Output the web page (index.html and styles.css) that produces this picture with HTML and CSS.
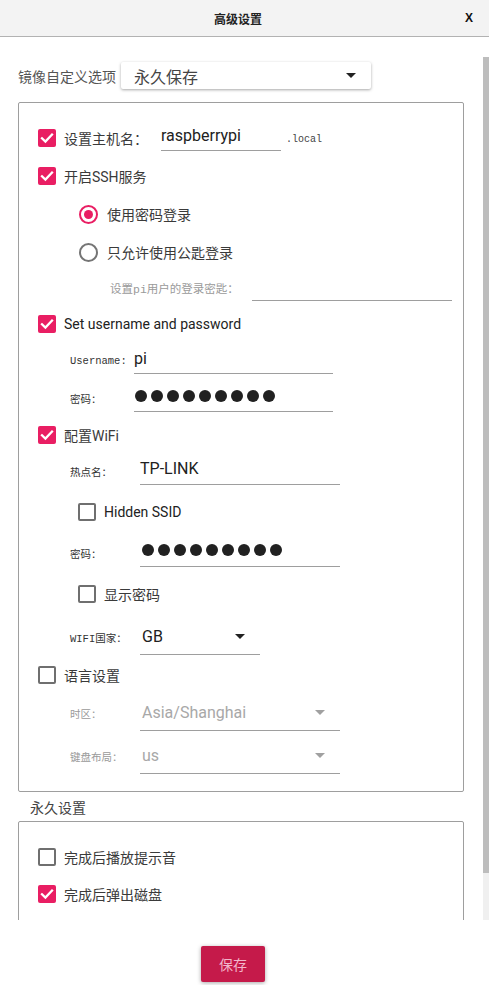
FILE: index.html
```html
<!DOCTYPE html>
<html lang="zh-CN">
<head>
<meta charset="utf-8">
<title>高级设置</title>
<link rel="stylesheet" href="styles.css">
</head>
<body>
<div class="app">
  <header class="titlebar">
    <span></span>
    <span class="title">高级设置</span>
    <span class="close">X</span>
  </header>

  <div class="main">
    <div class="scroll">
      <div class="preset-row">
        <span class="preset-label">镜像自定义选项</span>
        <div class="preset-select">
          <span>永久保存</span>
          <span class="caret"></span>
        </div>
      </div>

      <div class="group">
        <div class="row r38">
          <span class="cb on"><svg viewBox="0 0 18 18"><path d="M4 9.3 L7.4 12.6 L14 5.6"/></svg></span>
          <span class="lbl">设置主机名：</span>
          <div class="field host">raspberrypi</div>
          <span class="suffix">.local</span>
        </div>
        <div class="row r38">
          <span class="cb on"><svg viewBox="0 0 18 18"><path d="M4 9.3 L7.4 12.6 L14 5.6"/></svg></span>
          <span class="lbl">开启SSH服务</span>
        </div>
        <div class="row r38 ind-radio">
          <span class="radio on"></span>
          <span class="lbl">使用密码登录</span>
        </div>
        <div class="row r38 ind-radio">
          <span class="radio"></span>
          <span class="lbl">只允许使用公匙登录</span>
        </div>
        <div class="row r34 ind-key">
          <span class="key-lbl">设置pi用户的登录密匙：</span>
          <div class="field key"></div>
        </div>

        <div class="row r38">
          <span class="cb on"><svg viewBox="0 0 18 18"><path d="M4 9.3 L7.4 12.6 L14 5.6"/></svg></span>
          <span class="lbl latin">Set username and password</span>
        </div>
        <div class="row r35 ind-sub">
          <span class="sub-lbl w64">Username:</span>
          <div class="field user">pi</div>
        </div>
        <div class="row r40 ind-sub">
          <span class="sub-lbl w64">密码：</span>
          <div class="field user dots"><i></i><i></i><i></i><i></i><i></i><i></i><i></i><i></i><i></i></div>
        </div>

        <div class="row r34">
          <span class="cb on"><svg viewBox="0 0 18 18"><path d="M4 9.3 L7.4 12.6 L14 5.6"/></svg></span>
          <span class="lbl">配置WiFi</span>
        </div>
        <div class="row r38 ind-sub">
          <span class="sub-lbl w70">热点名：</span>
          <div class="field wide">TP-LINK</div>
        </div>
        <div class="row r44 ind-cb">
          <span class="cb"></span>
          <span class="lbl latin">Hidden SSID</span>
        </div>
        <div class="row r38 ind-sub">
          <span class="sub-lbl w70">密码：</span>
          <div class="field wide dots"><i></i><i></i><i></i><i></i><i></i><i></i><i></i><i></i><i></i></div>
        </div>
        <div class="row r44 ind-cb">
          <span class="cb"></span>
          <span class="lbl">显示密码</span>
        </div>
        <div class="row r42 ind-sub">
          <span class="sub-lbl w70">WIFI国家：</span>
          <div class="select country"><span>GB</span><span class="caret"></span></div>
        </div>

        <div class="row r34">
          <span class="cb"></span>
          <span class="lbl">语言设置</span>
        </div>
        <div class="row r42 ind-sub">
          <span class="sub-lbl w70 muted">时区：</span>
          <div class="select wide disabled"><span>Asia/Shanghai</span><span class="caret"></span></div>
        </div>
        <div class="row r44 ind-sub">
          <span class="sub-lbl w70 muted">键盘布局：</span>
          <div class="select wide disabled"><span>us</span><span class="caret"></span></div>
        </div>
      </div>

      <div class="section-title">永久设置</div>

      <div class="group group2">
        <div class="row r36">
          <span class="cb"></span>
          <span class="lbl">完成后播放提示音</span>
        </div>
        <div class="row r38">
          <span class="cb on"><svg viewBox="0 0 18 18"><path d="M4 9.3 L7.4 12.6 L14 5.6"/></svg></span>
          <span class="lbl">完成后弹出磁盘</span>
        </div>
      </div>
    </div>
    <div class="scrollbar"><div class="thumb"></div></div>
  </div>

  <footer class="footer">
    <button class="save">保存</button>
  </footer>
</div>
</body>
</html>
```

FILE: styles.css
```css
* { box-sizing: border-box; }

html, body {
  margin: 0;
  padding: 0;
  background: #ffffff;
}

body {
  font-family: Roboto, "Noto Sans CJK SC", sans-serif;
  color: #333333;
  width: 489px;
  height: 985px;
  overflow: hidden;
}

.app {
  display: flex;
  flex-direction: column;
  height: 985px;
}

/* title bar */
.titlebar {
  height: 37px;
  flex: 0 0 37px;
  background: #f3f3f3;
  border-bottom: 1px solid #b2b2b2;
  display: grid;
  grid-template-columns: 1fr auto 1fr;
  align-items: center;
  padding: 0 16px 0 0;
}
.title {
  font-size: 12px;
  font-weight: bold;
  color: #222;
  padding-left: 3px;
}
.close {
  justify-self: end;
  font-family: "Liberation Sans", sans-serif;
  font-size: 12px;
  font-weight: bold;
  color: #111;
}

/* main scroll area */
.main {
  flex: 0 0 883px;
  height: 883px;
  display: flex;
}
.scroll {
  flex: 1;
  overflow: hidden;
  padding: 0 19px 0 18px;
}
.scrollbar {
  width: 6px;
  margin-top: 20px;
  background: #f0f0f0;
}
.thumb {
  height: 816px;
  background: #bdbdbd;
}

/* preset select */
.preset-row {
  display: flex;
  align-items: center;
  margin-top: 25px;
  height: 27px;
  margin-bottom: 13px;
}
.preset-label {
  font-size: 14px;
  color: #555;
  width: 103px;
}
.preset-select {
  width: 250px;
  height: 27px;
  background: #fff;
  border-radius: 2px;
  box-shadow: 0 1px 3px rgba(0,0,0,0.35);
  display: flex;
  align-items: center;
  justify-content: space-between;
  padding: 0 15px 0 13px;
  font-size: 16px;
  color: #444;
}

.caret {
  width: 0;
  height: 0;
  border-left: 5px solid transparent;
  border-right: 5px solid transparent;
  border-top: 5px solid #222;
}

/* groups */
.group {
  border: 1px solid #9e9e9e;
  border-radius: 2px;
  padding: 16px 10px 13px 19px;
}
.group2 {
  padding-top: 17px;
  padding-bottom: 0;
  height: 120px;
  overflow: hidden;
}

.section-title {
  height: 29px;
  display: flex;
  align-items: center;
  padding-left: 12px;
  font-size: 14px;
  color: #444;
}

.row {
  display: flex;
  align-items: center;
}
.r34 { height: 34px; }
.r35 { height: 35px; }
.r36 { height: 36px; }
.r38 { height: 38px; }
.r40 { height: 40px; }
.r42 { height: 42px; }
.r44 { height: 44px; }

.ind-radio { padding-left: 41px; }
.ind-cb { padding-left: 40px; }
.ind-sub { padding-left: 32px; }
.ind-key { padding-left: 72px; }

/* checkbox */
.cb {
  width: 18px;
  height: 18px;
  flex: 0 0 18px;
  border: 2px solid #6f6f6f;
  border-radius: 2px;
  margin-right: 8px;
  display: flex;
  align-items: center;
  justify-content: center;
}
.cb.on {
  background: #e91e63;
  border: none;
}
.cb svg {
  width: 18px;
  height: 18px;
}
.cb svg path {
  fill: none;
  stroke: #ffffff;
  stroke-width: 2.3;
  stroke-linecap: square;
}

/* radio */
.radio {
  width: 19px;
  height: 19px;
  flex: 0 0 19px;
  border: 2px solid #757575;
  border-radius: 50%;
  margin-right: 9px;
  display: flex;
  align-items: center;
  justify-content: center;
}
.radio.on {
  border-color: #e91e63;
}
.radio.on::after {
  content: "";
  width: 9px;
  height: 9px;
  border-radius: 50%;
  background: #e91e63;
}

.lbl {
  font-size: 14px;
  color: #3a3a3a;
}
.lbl.latin { color: #222; }

.key-lbl {
  font-family: "Liberation Mono", "Noto Sans CJK SC", monospace;
  font-size: 11.5px;
  color: #9a9a9a;
  width: 142px;
}

.sub-lbl {
  font-family: "Liberation Mono", "Noto Sans CJK SC", monospace;
  font-size: 10.5px;
  color: #333;
}
.sub-lbl.muted { color: #9a9a9a; }
.w64 { width: 64px; }
.w70 { width: 70px; }

/* text fields */
.field {
  border-bottom: 1px solid #9e9e9e;
  font-size: 16px;
  color: #212121;
  display: flex;
  align-items: center;
}
.host {
  margin-left: 13px;
  width: 120px;
  height: 26px;
  padding-bottom: 5px;
}
.suffix {
  font-family: "Liberation Mono", monospace;
  font-size: 10px;
  color: #444;
  margin-left: 5px;
  padding-top: 2px;
}
.key {
  width: 200px;
  height: 25px;
}
.user {
  width: 199px;
  height: 26px;
  padding-bottom: 4px;
}
.r40 .user { height: 28px; }
.wide {
  width: 200px;
  height: 28px;
  padding-bottom: 5px;
}
.dots {
  gap: 4px;
  padding-left: 1px;
}
.wide.dots { padding-left: 2px; }
.dots i {
  display: block;
  width: 12px;
  height: 12px;
  border-radius: 50%;
  background: #212121;
}

/* selects */
.select {
  height: 36px;
  border-bottom: 1px solid #9e9e9e;
  display: flex;
  align-items: center;
  justify-content: space-between;
  padding: 0 15px 0 2px;
  font-size: 16px;
  color: #212121;
}
.country { width: 120px; }
.select.wide { width: 200px; padding-bottom: 0; }
.select.disabled { color: #a8a8a8; }
.select.disabled .caret { border-top-color: #a0a0a0; }

/* footer */
.footer {
  flex: 1;
  padding: 26px 0 0 201px;
}
.save {
  width: 64px;
  height: 36px;
  border: none;
  border-radius: 2px;
  background: #c51a4a;
  color: #f2b6cb;
  font-family: "Noto Sans CJK SC", sans-serif;
  font-size: 14px;
  box-shadow: 0 1px 4px rgba(0,0,0,0.35);
  padding: 0;
}
```
